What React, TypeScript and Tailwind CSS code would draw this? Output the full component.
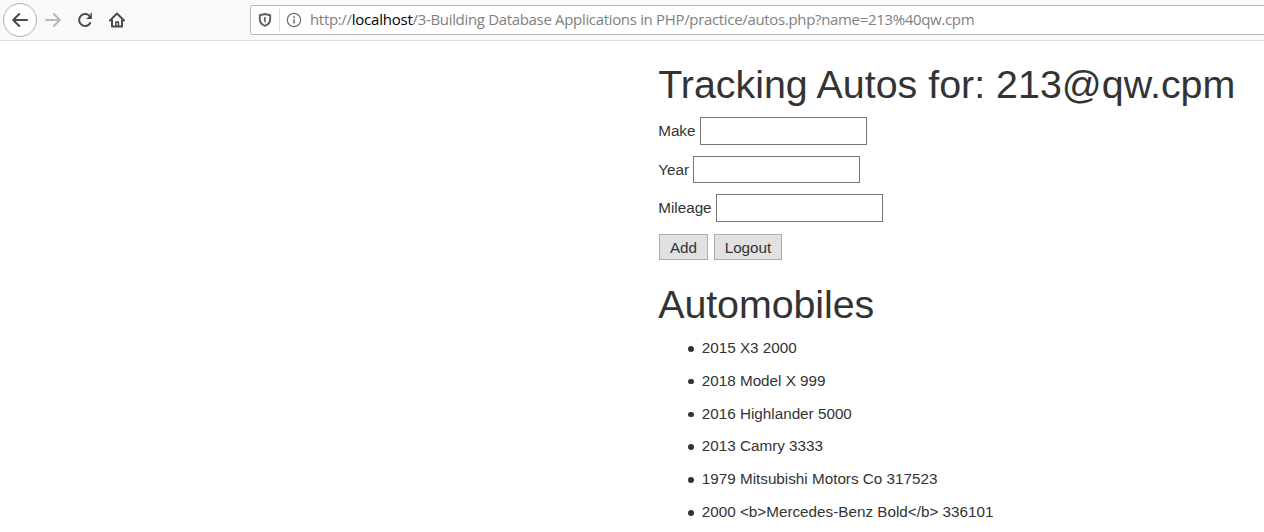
const autos: string[] = [
  '2015 X3 2000',
  '2018 Model X 999',
  '2016 Highlander 5000',
  '2013 Camry 3333',
  '1979 Mitsubishi Motors Co 317523',
  '2000 <b>Mercedes-Benz Bold</b> 336101',
];

function Toolbar() {
  return (
    <header className="flex h-[41px] border-b border-[#dedede] bg-[#f9f9fa]">
      <nav className="flex h-10 w-[250px] shrink-0 items-center pl-[3px] text-[#4a4a4a]">
        <button aria-label="Back" className="flex size-[34px] items-center justify-center rounded-full border border-[#b1b1b1] bg-white">
          <svg width="18" height="18" viewBox="0 0 18 18" fill="none" stroke="currentColor" strokeWidth="2" strokeLinecap="round" strokeLinejoin="round">
            <path d="M8.200 3 2.200 9l6 6M2.400 9h13.600" />
          </svg>
        </button>
        <button aria-label="Forward" className="ml-[7px] text-[#b9b9b9]">
          <svg width="18" height="18" viewBox="0 0 18 18" fill="none" stroke="currentColor" strokeWidth="2" strokeLinecap="round" strokeLinejoin="round">
            <path d="M9.800 3 15.800 9l-6 6M15.500 9H2" />
          </svg>
        </button>
        <button aria-label="Reload" className="ml-[14px]">
          <svg width="18" height="18" viewBox="0 0 18 18" fill="none">
            <path d="M14.300 6A6 6 0 1 0 14.300 12" stroke="currentColor" strokeWidth="2" strokeLinecap="round" />
            <path d="M15.900 2v5.500a.5.5 0 0 1-.5.5H9.900l2.800-2.200 1.800-.6V2z" fill="currentColor" />
          </svg>
        </button>
        <button aria-label="Home" className="ml-[14px]">
          <svg width="18" height="18" viewBox="0 0 18 18" fill="none" stroke="currentColor" strokeWidth="2" strokeLinecap="round" strokeLinejoin="round">
            <path d="M2 9.500 9 2.500l7 7M4 9.200v6.300h10V9.200" />
            <path d="M7.900 15.200v-4.300h2.500v4.300" strokeWidth="1.500" />
          </svg>
        </button>
      </nav>
      <div className="-mr-1 mt-[5px] flex h-[30px] flex-1 items-center rounded-[2px] border border-[#b9b9b9] bg-white">
        <svg className="ml-[6px] shrink-0" width="16" height="16" viewBox="0 0 16 16" fill="none">
          <path d="M8 2 13.200 3.200V7c0 3.200-1.900 5.600-5.200 6.900C4.700 12.600 2.800 10.200 2.800 7V3.200z" stroke="#606060" strokeWidth="1.900" strokeLinejoin="round" />
          <path d="M8.700 4.800 6.900 5.200v2.200c0 1.500.6 2.800 1.800 3.900z" fill="#606060" />
        </svg>
        <span className="ml-[6px] h-[22px] w-px bg-[#dcdcdc]" />
        <svg className="ml-[6px] shrink-0" width="16" height="16" viewBox="0 0 16 16" fill="none" stroke="#737373">
          <circle cx="8" cy="8" r="6.700" strokeWidth="1.200" />
          <path d="M8 7.200v4.200M8 4.300v1.600" strokeWidth="1.600" />
        </svg>
        <span className="mb-[2px] ml-[8px] text-[15px] leading-[20px] tracking-[-0.33px] whitespace-nowrap text-[#808080] [font-family:'Open_Sans',sans-serif]">
          http://<span className="tracking-[-0.22px] text-black">localhost</span>/3-Building Database Applications in PHP/practice/autos.php?name=213%40qw.cpm
        </span>
      </div>
    </header>
  );
}

function Field({ label, id, short = false }: { label: string; id: string; short?: boolean }) {
  return (
    <div className="flex h-7 items-start gap-[4.4px]">
      <label htmlFor={id} className="leading-[28.8px]">{label}</label>
      <input
        id={id}
        type="text"
        className={`${short ? 'h-[27px]' : 'h-7'} w-[167px] border border-[#767676] bg-white px-1 outline-none`}
      />
    </div>
  );
}

export default function App() {
  return (
    <div className="h-[532px] overflow-hidden bg-white text-[15.25px] leading-[21.8px] text-[#333] [font-family:'Liberation_Sans',Arial,sans-serif]">
      <Toolbar />
      <main className="pl-[658.2px]">
        <h1 className="pt-[22px] text-[39.4px] leading-[43px] whitespace-nowrap">Tracking Autos for: 213@qw.cpm</h1>
        <form className="mt-[11px]" onSubmit={(e) => e.preventDefault()}>
          <div className="flex flex-col gap-[10.7px]">
            <Field label="Make" id="make" />
            <Field label="Year" id="year" short />
            <Field label="Mileage" id="mileage" />
          </div>
          <div className="mt-[11.8px] ml-[0.8px] flex gap-1.5">
            <button type="submit" className="h-[26px] w-[49px] border border-[#adadad] bg-[#e1e1e1] pt-px">Add</button>
            <button type="button" className="h-[26px] w-[68px] border border-[#adadad] bg-[#e1e1e1] pt-px">Logout</button>
          </div>
        </form>
        <h1 className="mt-[23px] text-[39.4px] leading-[43px] tracking-[-0.08px]">Automobiles</h1>
        <ul className="mt-[10.8px] flex flex-col gap-[11px] pl-[30.2px]">
          {autos.map((auto) => (
            <li key={auto} className="flex items-center whitespace-nowrap">
              <span className="mt-0.5 mr-[7.800px] size-[5.600px] rounded-full bg-[#333]" />
              {auto}
            </li>
          ))}
        </ul>
      </main>
    </div>
  );
}
